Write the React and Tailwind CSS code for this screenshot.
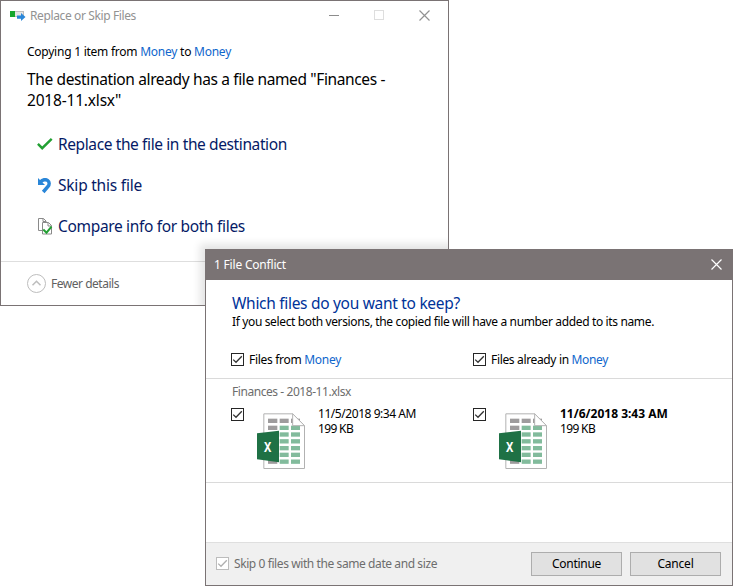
function Cross({ className }) {
  return (
    <svg className={className} width="11" height="11" viewBox="0 0 11 11" fill="none" stroke="currentColor" strokeWidth="1.2">
      <path d="M.5.5l10 10M10.5.5l-10 10" />
    </svg>
  );
}

function CopyIcon() {
  return (
    <svg width="16" height="12" viewBox="0 0 16 12" className="shrink-0">
      <rect x=".5" y="1.5" width="13" height="5" fill="#e4e4e4" stroke="#bdbdbd" />
      <rect x="0" y="1" width="5" height="6" fill="#17a62e" />
      <path d="M7 5.5h4V3l4.500 4-4.500 4V8.700H7z" fill="#2a86d8" />
    </svg>
  );
}

function CheckIcon() {
  return (
    <svg width="16" height="16" viewBox="0 0 16 16" fill="none" stroke="#22a033" strokeWidth="2.400">
      <path d="M.9 6.800l4.300 4.400L14.700 1.800" />
    </svg>
  );
}

function SkipIcon() {
  return (
    <svg width="16" height="16" viewBox="0 0 16 16" fill="none">
      <path d="M3.500 4C5.500 1.700 8.800 1 10.700 2.500c1.900 1.500 1.800 4 .3 6L6.200 14" stroke="#2a86d8" strokeWidth="3.500" />
      <path d="M1 0V7h7z" fill="#2a86d8" />
    </svg>
  );
}

function CompareIcon() {
  return (
    <svg width="16" height="17" viewBox="0 0 16 17" fill="none" stroke="#8a8a8a">
      <path d="M5 12.500H1.500V.5h5L9 3v2M6 .5V3.500h3" />
      <path d="M5.500 4.500h6L14.500 7.500v8.500h-9zM11 4.500V8h3.500" fill="#fff" />
      <path d="M6.300 11.500l3.200 3.200 5-6" stroke="#22a033" strokeWidth="2" />
    </svg>
  );
}

function Checkbox({ disabled = false }) {
  return (
    <span className={`flex size-[13px] shrink-0 items-center justify-center border bg-white ${disabled ? "border-[#bcbcbc] text-[#b0b0b0]" : "border-[#262626] text-[#333]"}`}>
      <svg width="11" height="11" viewBox="0 0 11 11" fill="none" stroke="currentColor" strokeWidth="1.3">
        <path d="M1.200 5.600l2.800 2.700 5.800-6" />
      </svg>
    </span>
  );
}

const cellRows = [41, 62, 82, 102.500, 123, 143, 163.500];

function ExcelFile() {
  return (
    <svg width="49" height="56" viewBox="36 24 147 168" className="shrink-0">
      <path d="M56.500 26.500H143L178.500 62V190.500H56.500z" fill="#fff" stroke="#b2b2b2" strokeWidth="3" />
      {cellRows.map((y, i) => (
        <g key={y}>
          <rect x="69" y={y} width="28" height="13" fill="#9e9c9d" />
          <rect x="104" y={y} width="27" height="13" fill={i === 0 ? "#9e9c9d" : "#82bb9c"} />
          <rect x="138" y={y} width="27" height="13" fill={i === 0 ? "#9e9c9d" : "#82bb9c"} />
        </g>
      ))}
      <path d="M143 26.500V62H178.500z" fill="#fff" stroke="#b2b2b2" strokeWidth="3" />
      <path d="M36 85L102 77V172L36 163z" fill="#1f7145" />
      <text x="57" y="141" textLength="22" lengthAdjust="spacingAndGlyphs" fontSize="43" fontWeight="700" fill="#fff">X</text>
    </svg>
  );
}

const actions = [
  { icon: CheckIcon, label: "Replace the file in the destination", tracking: "tracking-[-0.39px]" },
  { icon: SkipIcon, label: "Skip this file", tracking: "tracking-[-0.22px]" },
  { icon: CompareIcon, label: "Compare info for both files", tracking: "tracking-[-0.33px]" },
];

function ReplaceWindow() {
  return (
    <section className="absolute top-0 left-0 flex h-[306px] w-[449px] flex-col overflow-hidden border border-[#7a7374] bg-white">
      <header className="flex h-[30px] items-center pl-[9px] text-[#929292]">
        <CopyIcon />
        <h1 className="ml-1 tracking-[-0.38px]">Replace or Skip Files</h1>
        <div className="mr-[18px] mb-[2px] ml-auto flex items-center">
          <span className="h-px w-[10px] bg-[#8c8c8c]" />
          <span className="ml-[35px] size-[10px] border border-[#dedede]" />
          <Cross className="ml-[35px] text-[#929292]" />
        </div>
      </header>
      <p className="mt-[13px] pl-[26px] leading-4 tracking-[-0.245px]">
        Copying 1 item from <a className="text-[#0f66cc]">Money</a> to <a className="text-[#0f66cc]">Money</a>
      </p>
      <p className="mt-[9px] pl-[26px] text-[15.5px] leading-[21px] tracking-[-0.37px]">
        The destination already has a file named "Finances -<br />
        <span className="tracking-[-0.19px]">2018-11.xlsx"</span>
      </p>
      <ul className="mt-[13px] pl-9 text-[15.5px] text-[#051a66]">
        {actions.map(({ icon: Icon, label, tracking }) => (
          <li key={label} className="flex h-[41px] items-center gap-[5px]">
            <Icon />
            <span className={tracking}>{label}</span>
          </li>
        ))}
      </ul>
      <footer className="mt-auto flex h-[44px] items-center gap-[5px] border-t border-[#dedede] pl-[26px] text-[#616161]">
        <svg width="19" height="19" viewBox="0 0 19 19" fill="none" stroke="#bdbdbd">
          <circle cx="9.500" cy="9.500" r="9" />
          <path d="M5.500 11.300l4-4 4 4" strokeWidth="1.500" />
        </svg>
        <span className="tracking-[-0.476px]">Fewer details</span>
      </footer>
      <div className="absolute top-[248px] left-[204px] h-[337px] w-[528px] shadow-[0_0_8px_5px_rgba(0,0,0,0.11)]" />
    </section>
  );
}

function ConflictWindow() {
  return (
    <section className="absolute top-[249px] left-[205px] flex h-[337px] w-[528px] flex-col border border-[#7a7374] bg-white">
      <header className="flex h-[30px] items-center justify-between bg-[#7a7374] pr-[10px] pl-2 text-white">
        <h2 className="tracking-[-0.2px]">1 File Conflict</h2>
        <Cross className="mb-[2px] text-white" />
      </header>
      <div className="flex h-[99px] flex-col border-b border-[#dadada] pl-[26px]">
        <h3 className="mt-[13px] text-[15.5px] leading-[21px] tracking-[-0.3px] text-[#003399]">Which files do you want to keep?</h3>
        <p className="leading-4 tracking-[-0.361px]">If you select both versions, the copied file will have a number added to its name.</p>
        <div className="-ml-px mt-auto mb-[10px] flex leading-4">
          <label className="flex w-[242px] items-start gap-[5px]">
            <span className="pt-px"><Checkbox /></span>
            <span className="tracking-[-0.295px]">Files from <a className="text-[#0f66cc]">Money</a></span>
          </label>
          <label className="flex items-start gap-[5px]">
            <span className="pt-px"><Checkbox /></span>
            <span className="tracking-[-0.344px]">Files already in <a className="text-[#0f66cc]">Money</a></span>
          </label>
        </div>
      </div>
      <div className="h-[104px] border-b border-[#dadada] pl-[25px]">
        <p className="mt-[5px] ml-px leading-4 tracking-[-0.438px] text-[#6d6d6d]">Finances - 2018-11.xlsx</p>
        <div className="mt-[6px] flex">
          <div className="flex w-[242px] items-start">
            <span className="pt-[2px]"><Checkbox /></span>
            <span className="mt-[7px] ml-[13px]"><ExcelFile /></span>
            <div className="ml-3 leading-[15px]">
              <p className="tracking-[-0.446px]">11/5/2018 9:34 AM</p>
              <p className="tracking-[-0.65px]">199 KB</p>
            </div>
          </div>
          <div className="flex items-start">
            <span className="pt-[2px]"><Checkbox /></span>
            <span className="mt-[7px] ml-[13px]"><ExcelFile /></span>
            <div className="ml-3 leading-[15px]">
              <p className="font-bold">11/6/2018 3:43 AM</p>
              <p className="tracking-[-0.65px]">199 KB</p>
            </div>
          </div>
        </div>
      </div>
      <footer className="mt-auto flex h-[43px] items-center border-t border-[#dfdfdf] bg-[#f0f0f0] pr-[11px] pl-[10px]">
        <span className="mb-[2px]"><Checkbox disabled /></span>
        <span className="ml-[5px] tracking-[-0.41px] text-[#6d6d6d]">Skip 0 files with the same date and size</span>
        <button className="ml-auto h-6 w-[91px] border border-[#adadad] bg-[#e1e1e1] tracking-[-0.287px]">Continue</button>
        <button className="ml-2 h-6 w-[91px] border border-[#adadad] bg-[#e1e1e1] tracking-[-0.227px]">Cancel</button>
      </footer>
    </section>
  );
}

export default function App() {
  return (
    <main className="relative h-[586px] w-[733px] overflow-hidden bg-white font-['Noto_Sans','Open_Sans',sans-serif] text-xs text-black">
      <ReplaceWindow />
      <ConflictWindow />
    </main>
  );
}
